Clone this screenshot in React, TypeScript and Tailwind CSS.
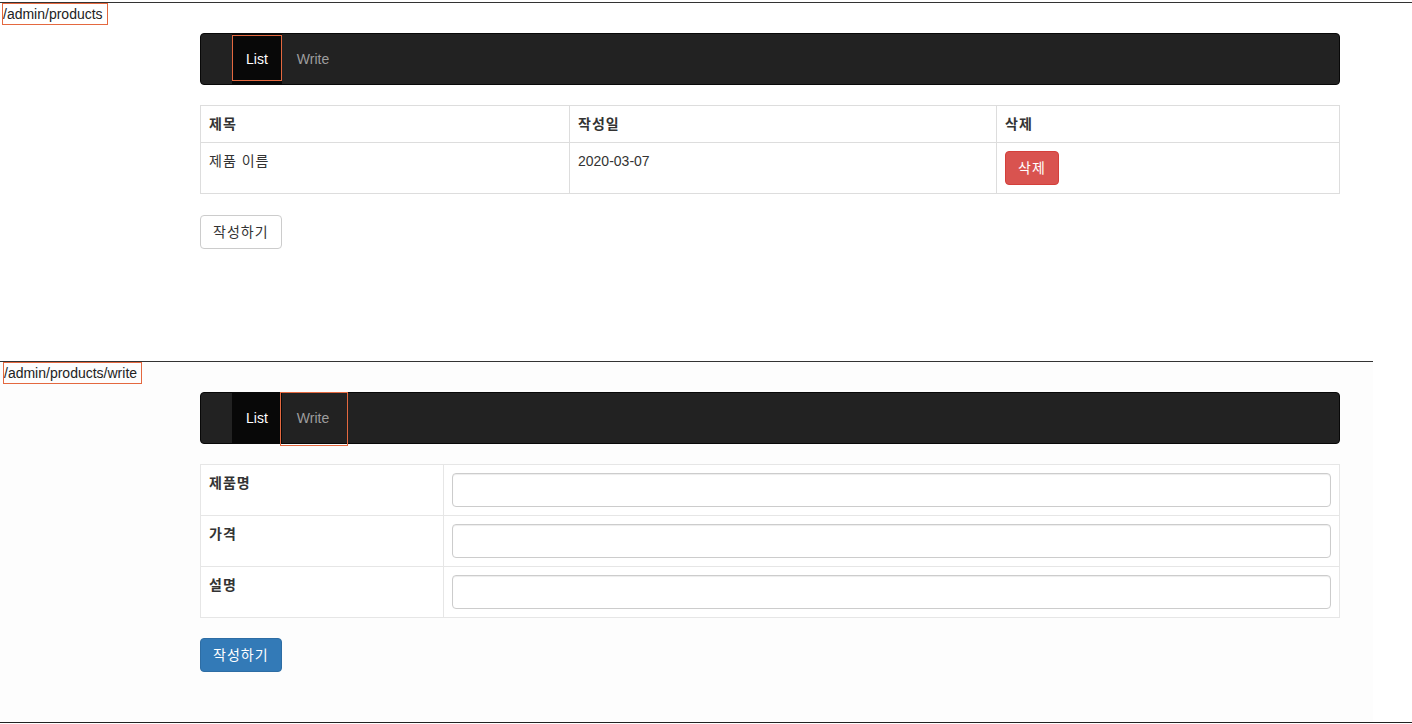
import React from "react";

const FONT = "font-['Liberation_Sans','Noto_Sans_CJK_KR',sans-serif]";

function RouteLabel({ path }: { path: string }) {
  return (
    <div className="ml-[2px] w-fit border border-[#e4683f] pr-[4px] text-[14px] leading-[20px] text-[#222]">
      {path}
    </div>
  );
}

function Navbar({ active }: { active: "list" | "write" }) {
  return (
    <div className="ml-[200px] flex h-[52px] w-[1140px] rounded-[4px] border border-[#080808] bg-[#222] pl-[31px]">
      <div className="relative h-[50px] bg-[#080808] px-[14px] py-[15px] text-[14px] leading-[20px] text-white">
        {active === "list" && (
          <span className="pointer-events-none absolute left-0 right-0 top-[1px] bottom-[3px] border border-[#e4683f]" />
        )}
        List
      </div>
      <div className="relative h-[50px] px-[15px] py-[15px] text-[14px] leading-[20px] text-[#9d9d9d]">
        {active === "write" && (
          <span className="pointer-events-none absolute -left-[2px] -right-[4px] -top-[1px] -bottom-[3px] border border-[#e4683f]" />
        )}
        Write
      </div>
    </div>
  );
}

function ListPage() {
  return (
    <div className="h-[359px] border-t border-[#333]">
      <RouteLabel path="/admin/products" />
      <div className="mt-[8px]">
        <Navbar active="list" />
      </div>
      <table className="ml-[200px] mt-[20px] w-[1140px] border-collapse border border-[#ddd] text-[14px] leading-[20px] text-[#333]">
        <thead>
          <tr>
            <th className="w-[369px] border border-[#ddd] p-[8px] text-left align-top font-bold tracking-[1px]">제목</th>
            <th className="w-[427px] border border-[#ddd] p-[8px] text-left align-top font-bold tracking-[1px]">작성일</th>
            <th className="border border-[#ddd] p-[8px] text-left align-top font-bold tracking-[1px]">삭제</th>
          </tr>
        </thead>
        <tbody>
          <tr>
            <td className="border border-[#ddd] p-[8px] align-top tracking-[1px]">제품 이름</td>
            <td className="border border-[#ddd] p-[8px] align-top">2020-03-07</td>
            <td className="border border-[#ddd] p-[8px] align-top">
              <button className="h-[34px] rounded-[4px] border border-[#d43f3a] bg-[#d9534f] px-[12px] text-[14px] leading-[20px] tracking-[1px] text-white">
                삭제
              </button>
            </td>
          </tr>
        </tbody>
      </table>
      <button className="ml-[200px] mt-[21px] h-[34px] rounded-[4px] border border-[#ccc] bg-white px-[12px] text-[14px] leading-[20px] tracking-[1px] text-[#333]">
        작성하기
      </button>
    </div>
  );
}

function WritePage() {
  const rows = ["제품명", "가격", "설명"];
  return (
    <div className="h-[361px] w-[1373px] border-t border-[#333] bg-[#fdfdfd]">
      <div className="ml-[1px]">
        <RouteLabel path="/admin/products/write" />
      </div>
      <div className="mt-[8px]">
        <Navbar active="write" />
      </div>
      <table className="ml-[200px] mt-[20px] w-[1140px] border-collapse border border-[#e6e6e6] bg-white text-[14px] leading-[20px] text-[#333]">
        <tbody>
          {rows.map((r) => (
            <tr key={r}>
              <th className="w-[243px] border border-[#e6e6e6] p-[8px] text-left align-top font-bold tracking-[1px]">{r}</th>
              <td className="border border-[#e6e6e6] p-[8px] align-top">
                <input
                  type="text"
                  className="block h-[34px] w-full rounded-[4px] border border-[#ccc] bg-white px-[12px] text-[14px] shadow-[inset_0_1px_1px_rgba(0,0,0,0.075)] outline-none"
                />
              </td>
            </tr>
          ))}
        </tbody>
      </table>
      <button className="ml-[200px] mt-[20px] h-[34px] rounded-[4px] border border-[#2e6da4] bg-[#337ab7] px-[12px] text-[14px] leading-[20px] tracking-[1px] text-white">
        작성하기
      </button>
    </div>
  );
}

export default function App() {
  return (
    <div className={`${FONT} min-h-[724px] bg-white pt-[2px]`}>
      <ListPage />
      <WritePage />
      <div className="border-t border-[#222]" />
    </div>
  );
}
